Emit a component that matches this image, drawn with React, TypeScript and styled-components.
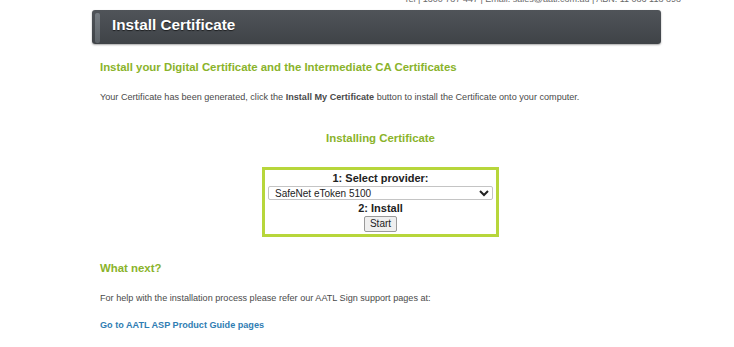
import styled, { createGlobalStyle } from "styled-components";

const GlobalStyle = createGlobalStyle`
  body {
    margin: 0;
    background: #ffffff;
    font-family: "Liberation Sans", Arial, sans-serif;
  }
`;

const Page = styled.div`
  width: 569px;
  padding-left: 92px;
`;

const ContactStrip = styled.div`
  height: 4px;
  overflow: hidden;
  display: flex;
  align-items: flex-end;
  justify-content: flex-end;
  margin-right: -20px;
  margin-bottom: 6px;
`;

const ContactText = styled.span`
  font-size: 9px;
  line-height: 9px;
  color: #6a6a6a;
  white-space: nowrap;
`;

const HeaderBar = styled.div`
  height: 34px;
  display: flex;
  align-items: flex-start;
  gap: 12px;
  padding: 3px 0 0 3px;
  box-sizing: border-box;
  background: linear-gradient(#505459, #3f4347);
  border-radius: 3px;
  box-shadow: 0 1px 2px rgba(0, 0, 0, 0.35);
`;

const HeaderAccent = styled.div`
  width: 5px;
  height: 30px;
  border-radius: 2px;
  background: linear-gradient(#767c82, #5d6368);
`;

const HeaderTitle = styled.h1`
  margin: 3px 0 0;
  font-size: 15.3px;
  line-height: 18px;
  font-weight: 700;
  color: #ffffff;
  text-shadow: 0 1px 1px rgba(0, 0, 0, 0.6);
`;

const Content = styled.div`
  padding-left: 8px;
  display: flex;
  flex-direction: column;
`;

const SectionTitle = styled.h2<{ $top: number; $center?: boolean }>`
  margin: ${({ $top }) => $top}px 0 0;
  font-size: 11.4px;
  line-height: 14px;
  font-weight: 700;
  color: #8ab32b;
  text-align: ${({ $center }) => ($center ? "center" : "left")};
`;

const Text = styled.p<{ $top: number }>`
  margin: ${({ $top }) => $top}px 0 0;
  font-size: 9.1px;
  line-height: 12px;
  color: #4a4a4a;
`;

const InstallBox = styled.div`
  align-self: center;
  width: 237px;
  margin-top: 22px;
  box-sizing: border-box;
  border: 3px solid #b7d63b;
  padding: 1px 3px 2px;
  display: flex;
  flex-direction: column;
  align-items: center;
`;

const StepLabel = styled.div`
  font-size: 11px;
  line-height: 14px;
  font-weight: 700;
  color: #222222;
`;

const ProviderSelect = styled.select`
  width: 100%;
  height: 14px;
  margin: 1px 0 1px;
  padding: 0 2px;
  font-family: "Liberation Sans", Arial, sans-serif;
  font-size: 10px;
  line-height: 12px;
  color: #222222;
  background: #ffffff;
  border: 1px solid #c4c4c4;
  border-radius: 2px;
`;

const StartButton = styled.button`
  margin-top: 1px;
  height: 16px;
  padding: 0 5px;
  font-family: "Liberation Sans", Arial, sans-serif;
  font-size: 10px;
  line-height: 12px;
  color: #222222;
  background: #efefef;
  border: 1px solid #9a9a9a;
  border-radius: 2px;
`;

const GuideLink = styled.a`
  margin-top: 15px;
  font-size: 9.1px;
  line-height: 12px;
  font-weight: 700;
  color: #2f7db3;
  text-decoration: none;
`;

export default function App() {
  return (
    <>
      <GlobalStyle />
      <Page>
        <ContactStrip>
          <ContactText>Tel | 1300 787 447 | Email: sales@aatl.com.au | ABN: 11 086 118 898</ContactText>
        </ContactStrip>
        <HeaderBar>
          <HeaderAccent />
          <HeaderTitle>Install Certificate</HeaderTitle>
        </HeaderBar>
        <Content>
          <SectionTitle $top={16}>
            Install your Digital Certificate and the Intermediate CA Certificates
          </SectionTitle>
          <Text $top={17}>
            Your Certificate has been generated, click the <b>Install My Certificate</b> button to
            install the Certificate onto your computer.
          </Text>
          <SectionTitle $top={28} $center>
            Installing Certificate
          </SectionTitle>
          <InstallBox>
            <StepLabel>1: Select provider:</StepLabel>
            <ProviderSelect defaultValue="safenet">
              <option value="safenet">SafeNet eToken 5100</option>
            </ProviderSelect>
            <StepLabel>2: Install</StepLabel>
            <StartButton>Start</StartButton>
          </InstallBox>
          <SectionTitle $top={24}>What next?</SectionTitle>
          <Text $top={17}>
            For help with the installation process please refer our AATL Sign support pages at:
          </Text>
          <GuideLink href="#">Go to AATL ASP Product Guide pages</GuideLink>
        </Content>
      </Page>
    </>
  );
}
